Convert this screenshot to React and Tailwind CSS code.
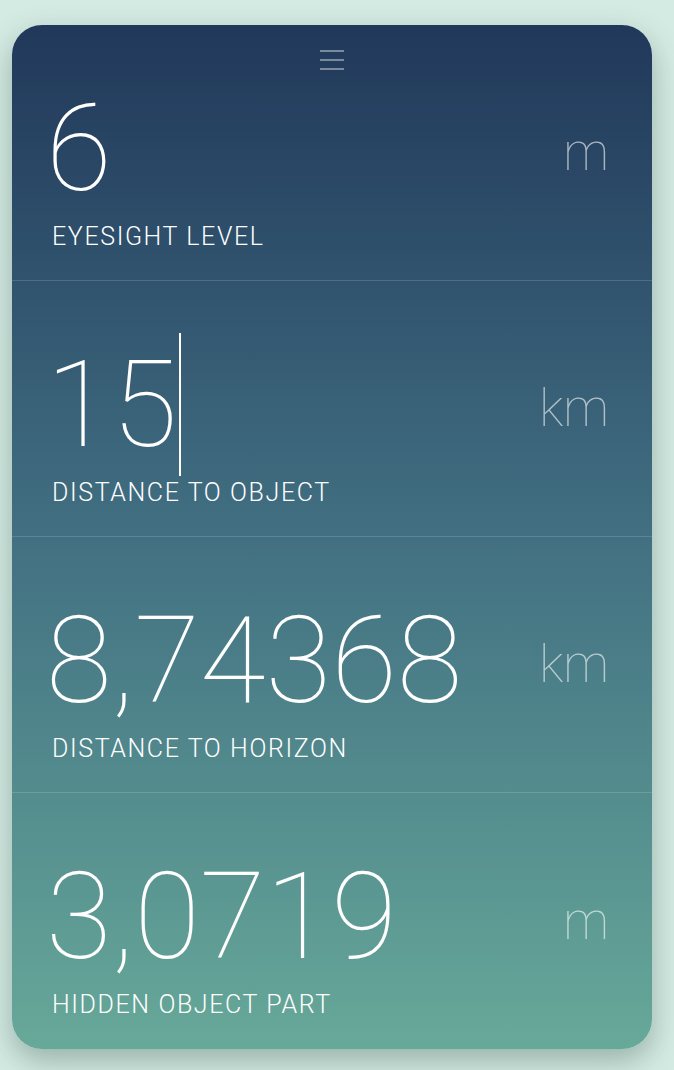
import React from 'react';

const rows = [
  { value: '6', label: 'EYESIGHT LEVEL', unit: 'm' },
  { value: '15', label: 'DISTANCE TO OBJECT', unit: 'km', focused: true },
  { value: '8,74368', label: 'DISTANCE TO HORIZON', unit: 'km' },
  { value: '3,0719', label: 'HIDDEN OBJECT PART', unit: 'm' },
];

const Row = ({ value, label, unit, focused, last }) => (
  <div className={`flex justify-between h-[256px] pl-[34px] pr-[43px] ${last ? '' : 'border-b border-white/15'}`}>
    <div className="pt-[64px]">
      <div className="relative inline-block text-[120px] leading-none font-thin text-white">
        {value}
        {focused && <span className="absolute right-[-4px] top-[-12px] w-[2px] h-[143px] bg-white" />}
      </div>
      <div className="mt-[15px] pl-[6px] text-[25px] leading-[25px] text-white font-light tracking-[1.6px]">{label}</div>
    </div>
    <div className="self-center text-[51px] leading-none font-thin text-white/60">{unit}</div>
  </div>
);

export default function App() {
  return (
    <div className="min-h-[1070px] bg-[#d4ebe3] pt-[25px] pl-[12px]" style={{ fontFamily: 'Roboto, "Noto Sans", sans-serif' }}>
      <div className="relative w-[640px] rounded-[30px] overflow-hidden bg-gradient-to-b from-[#21385a] via-[#427082] to-[#67a999] shadow-[0_12px_30px_rgba(40,70,60,0.35)]">
        <button className="absolute left-1/2 top-[25px] -translate-x-1/2 flex flex-col gap-[7px] p-0">
          <span className="block w-[24px] h-[2px] bg-white/40" />
          <span className="block w-[24px] h-[2px] bg-white/40" />
          <span className="block w-[24px] h-[2px] bg-white/40" />
        </button>
        {rows.map((r, i) => (
          <Row key={r.label} {...r} last={i === rows.length - 1} />
        ))}
      </div>
    </div>
  );
}
